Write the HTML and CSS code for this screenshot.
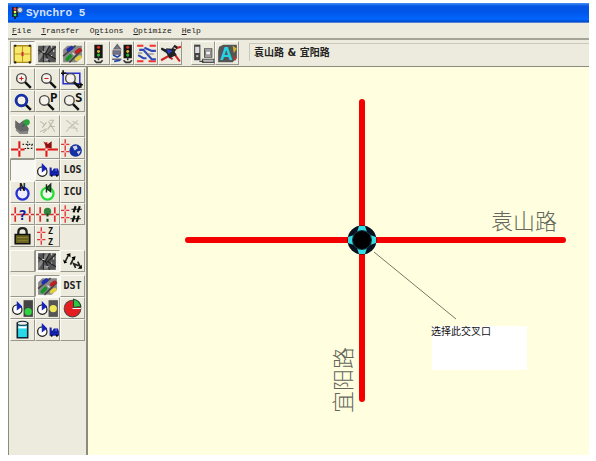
FILE: index.html
```html
<!DOCTYPE html>
<html lang="zh-CN">
<head>
<meta charset="utf-8">
<title>Synchro 5</title>
<link rel="stylesheet" href="styles.css">
</head>
<body>
<svg class="defs" aria-hidden="true">
  <symbol id="clock" viewBox="0 0 24 21"><circle cx="7" cy="12" r="4.5" fill="#fff" stroke="#222" stroke-width="1.2"/><path d="M7 12V5l4 4z" fill="#1522b8" stroke="#1522b8"/></symbol>
  <symbol id="car" viewBox="0 0 24 21"><path d="M14 8h2v3h1l1-2h4l1 3v4h-9z" fill="#1420a8"/><path d="M19 11l1-1h1v1z" fill="#8fa0ff"/><circle cx="16" cy="16" r="1"/><circle cx="21" cy="16" r="1"/></symbol>
  <symbol id="lens" viewBox="0 0 24 21"><path d="M13 13l6 6" stroke="#111" stroke-width="2.4"/><circle cx="10" cy="10" r="4.6" fill="#f4f2ea" stroke="#444" stroke-width="1.3"/></symbol>
  <symbol id="photo" viewBox="0 0 24 21"><path d="M3 3h17v16H3z" fill="#555"/><path d="M3 13l8-10h3L3 19zM9 14l5 4H8z" fill="#888"/><path d="M14 3l-4 8 4 8M3 7l8 5 9-8M12 11l8 5M8 3v16" stroke="#222" fill="none"/><path d="M16 3v2M18 7v2M16 12v1M7 9h2M11 16h2" stroke="#ddd"/></symbol>
  <symbol id="cars" viewBox="0 0 24 21"><path d="M7 3h14v11l-5 5H3V7z" fill="#888"/><path d="M3 13L15 3M9 19L21 7" stroke="#444" stroke-width="1.5"/><g stroke-width="3.6" stroke-linecap="round"><path d="M8 7l3-2" stroke="#2030b0"/><path d="M16 9l3-2" stroke="#c02020"/><path d="M7 16l3-3" stroke="#169428"/><path d="M16 16l3-2" stroke="#e0d040"/></g><path d="M12 10l2 2" stroke="#eee"/></symbol>
  <symbol id="signal" viewBox="0 0 24 21"><path d="M8 2h8v13H8z" fill="#161616"/><circle cx="12" cy="4.5" r="1.5" fill="#d32"/><circle cx="12" cy="8.500" r="1.4" fill="#db3"/><circle cx="12" cy="12" r="1.5" fill="#2b3"/><path d="M12 14v3M8 17l2 2h4l2-2" stroke="#333" stroke-width="1.5" fill="none"/></symbol>
  <symbol id="cross" viewBox="0 0 24 21"><path d="M5 2v17M1 7h8M1 14h8" stroke="#d33" stroke-width="1.3"/><path d="M4 6h2v2H4zM4 13h2v2H4z" fill="#fbb"/></symbol>
  <symbol id="pair" viewBox="0 0 24 21"><path d="M5 4v14M19 4v14M1 11h22" stroke="#dc2c28" stroke-width="1.6"/><path d="M4 10h2v2H4zM18 10h2v2h-2z" fill="#fff"/></symbol>
</svg>
<div class="window">
  <header class="titlebar">
    <svg class="logo" viewBox="0 0 13 14"><path d="M1 1h6v10H1z" fill="#18243c"/><circle cx="4" cy="3" r="1.4" fill="#f44"/><circle cx="4" cy="6" r="1.3" fill="#ee5"/><circle cx="4" cy="9" r="1.3" fill="#4d6"/><path d="M4 11v2" stroke="#18243c" stroke-width="2"/><circle cx="9" cy="4" r="2.6" fill="#d5dbe5" stroke="#667"/></svg>
    <h1>Synchro 5</h1>
  </header>
  <nav class="menu">
    <button><u>F</u>ile</button><button><u>T</u>ransfer</button><button>O<u>p</u>tions</button><button><u>O</u>ptimize</button><button><u>H</u>elp</button>
  </nav>
  <div class="toolbar">
    <div class="group">
      <button class="tool on" aria-label="Map"><svg viewBox="0 0 24 21"><path d="M4 3h16v16H4z" fill="#f7e96a" stroke="#a98d1c" stroke-width="1.4"/><path d="M12 3v16M5 11h14" stroke="#c8951e"/><path d="M12 9v4" stroke="#c33" stroke-width="2"/><path d="M4 3h2M18 3h2M4 19h2M18 19h2" stroke="#222" stroke-width="2"/></svg></button>
      <button class="tool" aria-label="Lanes"><svg viewBox="0 0 24 21"><use href="#photo"/></svg></button>
      <button class="tool" aria-label="Volumes"><svg viewBox="0 0 24 21"><use href="#cars"/></svg></button>
    </div>
    <div class="group">
      <button class="tool" aria-label="Timing"><svg viewBox="0 0 24 21"><use href="#signal"/></svg></button>
      <button class="tool" aria-label="Phasing"><svg viewBox="0 0 24 21"><use href="#signal" x="5" width="24" height="21"/><path d="M7 2l3 4H4zM3 8h7v3H3zM2 16h9" fill="#778" stroke="#667" stroke-width="1.3"/><path d="M3 12l4 2 3-2M4 18l6-1" stroke="#24a" stroke-width="1.6" fill="none"/></svg></button>
      <button class="tool" aria-label="Time space"><svg viewBox="0 0 24 21"><path d="M3 3h6M15 3h6M3 18h6M14 18h7" stroke="#e33" stroke-width="2"/><path d="M5 7h4l8 9h4M10 5l7 3h4M4 12l5 3h3" stroke="#3048b8" stroke-width="2" fill="none"/><path d="M13 11h6M4 10h4" stroke="#777"/></svg></button>
      <button class="tool" aria-label="Simulation"><svg viewBox="0 0 24 21"><path d="M3 17l7-4 4 3M14 9l7 9M16 6l6-2" stroke="#d02222" stroke-width="2" fill="none"/><path d="M3 5l10 1 3-4 3 2-3 5 2 3-7 3-3-5-5-3z" fill="#222"/><path d="M8 6l6 2-4 3z" fill="#2542c8"/><path d="M5 5l3 1M15 5l2 1" stroke="#eee"/></svg></button>
    </div>
    <div class="group apart">
      <button class="tool" aria-label="Database"><svg viewBox="0 0 24 21"><path d="M3 2h6v15H3z" fill="#444"/><path d="M4 4h4v6H4z" fill="#ddd"/><path d="M5 12h2v2H5z" fill="#bbb"/><path d="M13 6h7v8h-7zM11 16h11v3H11z" fill="#bbb" stroke="#555"/><path d="M14 8h5v4h-5z" fill="#eee" stroke="#777"/><path d="M8 18h4" stroke="#222"/></svg></button>
      <button class="tool" aria-label="Text"><svg viewBox="0 0 24 21"><path d="M4 4l4-2h13v12l-4 5H3V8z" fill="#555"/><path d="M17 3l4 3-3 4z" fill="#d7b62a"/><path d="M17 12l4 3-2 3z" fill="#b33"/><text class="glyph letter" x="11" y="17">A</text></svg></button>
    </div>
    <output class="status">袁山路 &amp; 宜阳路</output>
  </div>
  <div class="work">
    <aside class="palette">
      <div class="grid">
        <button class="tool" aria-label="Zoom in"><svg viewBox="0 0 24 21"><use href="#lens" x="1" width="24" height="21"/><path d="M9 10h4M11 8v4" stroke="#c22"/></svg></button>
        <button class="tool" aria-label="Zoom out"><svg viewBox="0 0 24 21"><use href="#lens" x="1" width="24" height="21"/><path d="M9 10h4" stroke="#c22"/></svg></button>
        <button class="tool" aria-label="Zoom window"><svg viewBox="0 0 24 21"><path d="M3 5h16v10H3z" fill="none" stroke="#2630d0" stroke-width="1.5"/><use href="#lens"/><path d="M1 5h5M3 2v5M17 16h5M20 14v5" stroke="#111" stroke-width="1.5"/></svg></button>
        <button class="tool" aria-label="Zoom all"><svg viewBox="0 0 24 21"><use href="#lens" x="1" width="24" height="21"/><circle cx="11" cy="10" r="5.300" fill="none" stroke="#1730a8" stroke-width="2.500"/></svg></button>
        <button class="tool" aria-label="Zoom previous"><svg viewBox="0 0 24 21"><use href="#lens" x="-1" width="24" height="21"/><text class="glyph" x="18" y="11">P</text></svg></button>
        <button class="tool" aria-label="Zoom scale"><svg viewBox="0 0 24 21"><use href="#lens" x="-1" width="24" height="21"/><text class="glyph" x="18" y="11">S</text></svg></button>
      </div>
      <div class="grid">
        <button class="tool" aria-label="Map color"><svg viewBox="0 0 24 21"><path d="M5 5l4 3 4-3 5 8-1 5H9l-4-6z" fill="#666"/><path d="M6 14l4 3 7-1" stroke="#888" stroke-width="2" fill="none"/><circle cx="16" cy="7" r="3" fill="#2ca23a"/><path d="M12 11l2-2" stroke="#164"/></svg></button>
        <button class="tool" aria-label="Transform map" disabled><svg viewBox="0 0 24 21"><path d="M5 6l4 3M7 12l4-5M5 16l6-3M13 6l6 10M18 5l-6 9M14 5h4M8 17l3-3M14 11h5" stroke="#bbb9ac" fill="none"/></svg></button>
        <button class="tool" aria-label="Scale map" disabled><svg viewBox="0 0 24 21"><path d="M6 5l5 4M6 16l6-7 5 7M12 6l6 3M8 12l9 1M17 5l-6 6" stroke="#c5c3b7" fill="none"/></svg></button>
        <button class="tool" aria-label="Add link"><svg viewBox="0 0 24 21"><path d="M1 12h13M9 4v15" stroke="#e01818" stroke-width="2"/><path d="M8 11h2v2H8z" fill="#fff"/><path d="M12 7h10M17 4v9M14 11h8M21 7v6" stroke="#222" stroke-dasharray="1.500 1.500"/></svg></button>
        <button class="tool" aria-label="Move node"><svg viewBox="0 0 24 21"><path d="M1 12h21M11 5v14" stroke="#e01818" stroke-width="2"/><path d="M10 11h2v2h-2z" fill="#fff"/><path d="M8 4l4 3 4-3v7l-5-1z" fill="#8c1010"/></svg></button>
        <button class="tool" aria-label="Link settings"><svg viewBox="0 0 24 21"><use href="#cross"/><circle cx="15" cy="13" r="6" fill="#1530a0"/><path d="M12 9l4-1 1 3-3 2zM16 14l4-1-2 4z" fill="#d0d6e0"/></svg></button>
        <button class="tool on" aria-label="No display"></button>
        <button class="tool" aria-label="Delay"><svg viewBox="0 0 24 21"><use href="#clock"/><use href="#car"/></svg></button>
        <button class="tool">LOS</button>
        <button class="tool" aria-label="Natural cycle"><svg viewBox="0 0 24 21"><circle cx="12" cy="12" r="5.800" fill="#eef" stroke="#2630d0" stroke-width="2.200"/><text class="glyph small" x="12" y="10">N</text></svg></button>
        <button class="tool" aria-label="Cycle length"><svg viewBox="0 0 24 21"><circle cx="12" cy="12" r="5.800" fill="#efe" stroke="#25dd35" stroke-width="2.200"/><path d="M11 11V3M15 3v7l-4-3z" fill="#286a30" stroke="#143018" stroke-width="1.400"/></svg></button>
        <button class="tool">ICU</button>
        <button class="tool" aria-label="Coordinatability"><svg viewBox="0 0 24 21"><use href="#pair"/><text class="glyph query" x="12" y="16">?</text></svg></button>
        <button class="tool" aria-label="Link factors"><svg viewBox="0 0 24 21"><use href="#pair"/><circle cx="12" cy="8" r="3.500" fill="#35843c"/><path d="M12 10v3M12 15v3" stroke="#194a20" stroke-width="2"/></svg></button>
        <button class="tool" aria-label="Numbers"><svg viewBox="0 0 24 21"><use href="#cross"/><path d="M13 9l2-6M17 9l2-6M12 18l2-6M16 18l2-6" stroke="#111" stroke-width="2"/><path d="M11 6h10M10 15h10" stroke="#111"/></svg></button>
        <button class="tool" aria-label="Lock timings"><svg viewBox="0 0 24 21"><path d="M8 10V7q0-4 4-4t4 4v3" fill="none" stroke="#222" stroke-width="2.200"/><path d="M5 9h14v9H5z" fill="#66611d" stroke="#111" stroke-width="1.500"/><path d="M7 12h10M7 15h10" stroke="#8a8236"/></svg></button>
        <button class="tool" aria-label="Zones"><svg viewBox="0 0 24 21"><use href="#cross" x="1" width="24" height="21"/><text class="glyph tiny" x="15" y="9">Z</text><text class="glyph tiny" x="15" y="19">Z</text></svg></button>
      </div>
      <div class="grid">
        <button class="tool" aria-label="No background"></button>
        <button class="tool on" aria-label="Show lanes"><svg viewBox="0 0 24 21"><use href="#photo"/></svg></button>
        <button class="tool" aria-label="Show flow"><svg viewBox="0 0 24 21"><path d="M5 11l3-6M10 14l3-6M15 17l-2-4 5 2M17 11l3 6" stroke="#222" stroke-width="1.600" fill="none"/><path d="M6 4l4-1v4zM11 7l4-1-1 4zM17 18h4v-4zM3 9l4 3-3 1z"/></svg></button>
      </div>
      <div class="grid">
        <button class="tool" aria-label="No volumes"></button>
        <button class="tool on" aria-label="Show volumes"><svg viewBox="0 0 24 21"><use href="#cars"/></svg></button>
        <button class="tool">DST</button>
        <button class="tool" aria-label="Green time"><svg viewBox="0 0 24 21"><use href="#clock"/><path d="M13 3h9v16h-9z" fill="#444"/><circle cx="17.500" cy="14" r="3.500" fill="#2dd440"/></svg></button>
        <button class="tool" aria-label="Yellow time"><svg viewBox="0 0 24 21"><use href="#clock"/><path d="M13 3h9v16h-9z" fill="#555"/><circle cx="17.500" cy="11" r="3.500" fill="#f1e656"/></svg></button>
        <button class="tool" aria-label="Splits"><svg viewBox="0 0 24 21"><circle cx="12" cy="11" r="8" fill="#e51d20" stroke="#544"/><path d="M13 10V2q6 1 7 7z" fill="#2cc746" stroke="#243"/><path d="M12 11h8" stroke="#fff"/></svg></button>
        <button class="tool" aria-label="Capacity"><svg viewBox="0 0 24 21"><path d="M7 4h10v14H7z" fill="#27d9e8" stroke="#123" stroke-width="1.500"/><ellipse cx="12" cy="4" rx="5" ry="2" fill="#eee" stroke="#123"/><path d="M8 7h8v2H8z" fill="#fff"/></svg></button>
        <button class="tool" aria-label="Queue delay"><svg viewBox="0 0 24 21"><use href="#clock"/><use href="#car"/></svg></button>
        <button class="tool" aria-label="Blank"></button>
      </div>
    </aside>
    <main class="canvas">
      <svg class="map" width="500" height="386" viewBox="0 0 500 386" role="img" aria-label="路网图">
        <path class="road" d="M274 35V332M100 173H475"/>
        <path class="leader" d="M286 185L368 252"/>
        <circle cx="274" cy="173" r="14.500" fill="#06101f"/>
        <path d="M271 159h6l2 6h-10zM271 187h6l2-6h-10zM260 170v6l6 2v-10zM288 170v6l-6 2v-10z" fill="#35dce2"/>
        <circle cx="274" cy="173" r="9.500" stroke="#163c4c"/>
        <path d="M344 259h95v44h-95z" fill="#fff"/>
        <text class="street" x="403" y="162">袁山路</text>
        <text class="street" transform="translate(263 346) rotate(-90)">宜阳路</text>
        <text class="note" x="343" y="268">选择此交叉口</text>
      </svg>
    </main>
  </div>
</div>
</body>
</html>
```
FILE: styles.css
```css
* { box-sizing: border-box; }
body {
  margin: 0;
  padding: 3px 7px 6px 8px;
  min-height: 100vh;
  display: flex;
  background: #fff;
  color: #222;
  font-family: "Liberation Mono", "Noto Sans CJK SC", monospace;
}
button { font: inherit; color: inherit; padding: 0; border: 0; background: none; }
.defs { position: absolute; width: 0; height: 0; }
.window { flex: 1; min-width: 0; display: flex; flex-direction: column; background: #ecebdd; }
.titlebar {
  height: 20px;
  display: flex;
  align-items: center;
  gap: 2px;
  padding-left: 3px;
  background: linear-gradient(#4391f8 0, #0655e4 3px, #0055e8 9px, #0066ff 16px, #0049c9 19px, #a9b9e8 20px);
}
.logo { width: 13px; height: 14px; }
.titlebar h1 { margin: 0; font-size: 11px; line-height: 16px; color: #d5e2fb; }
.menu {
  height: 17px;
  display: flex;
  gap: 10px;
  padding-left: 4px;
  border-bottom: 2px solid #a5a498;
  font-size: 8px;
  line-height: 15px;
}
.menu u { text-underline-offset: 1px; }
.toolbar { height: 27px; display: flex; padding: 1px 0 1px 2px; border-bottom: 1px solid #8c8b80; }
.group { display: flex; padding-right: 1px; }
.group.apart { padding: 0 10px 0 8px; }
.tool {
  height: 100%;
  display: grid;
  place-items: center;
  border: 1px solid;
  border-color: #fbfaf4 #98978b #98978b #fbfaf4;
  background: #ecebdd;
  font: bold 10px/16px "DejaVu Sans Mono", monospace;
}
.tool svg { width: 25px; height: 22px; margin: -1px; }
.tool.on { background: #f7f6f0; border-color: #98978b #fbfaf4 #fbfaf4 #98978b; }
.group .tool { width: 25px; }
.group + .group .tool { width: 24px; }
.group .tool svg { height: 23px; }
.glyph { font: bold 12px "DejaVu Sans Mono", monospace; text-anchor: middle; fill: #111; }
.glyph.small { font-size: 10px; }
.glyph.tiny { font-size: 8px; }
.glyph.query { font-size: 14px; fill: #15209c; }
.glyph.letter { font: bold 17px "Liberation Sans", sans-serif; fill: #22d5e6; }
.status {
  flex: 1;
  padding-left: 4px;
  margin: 2px 0 4px;
  border-top: 1px solid #c9c8ba;
  border-left: 1px solid #c9c8ba;
  font: bold 10px/18px "DejaVu Sans", "Noto Sans CJK SC", sans-serif;
}
.work { flex: 1; display: flex; min-height: 0; }
.palette {
  flex: none;
  padding: 1px 1px 0;
  border: solid #8c8b80;
  border-width: 0 2px 0 1px;
  display: flex;
  flex-direction: column;
  gap: 3px;
}
.grid { display: grid; grid-template-columns: repeat(3, 25px); grid-auto-rows: 22px; }
.canvas { flex: 1; min-width: 0; background: #ffffdf; overflow: hidden; }
.map { display: block; }
.road { fill: none; stroke: #f40000; stroke-width: 6px; stroke-linecap: round; }
.leader { stroke: #777768; stroke-width: 1px; }
.street { font: 300 22px "Noto Sans CJK SC", sans-serif; fill: #66665c; }
.note { font: 10px "Noto Sans CJK SC", sans-serif; fill: #111; }
```
